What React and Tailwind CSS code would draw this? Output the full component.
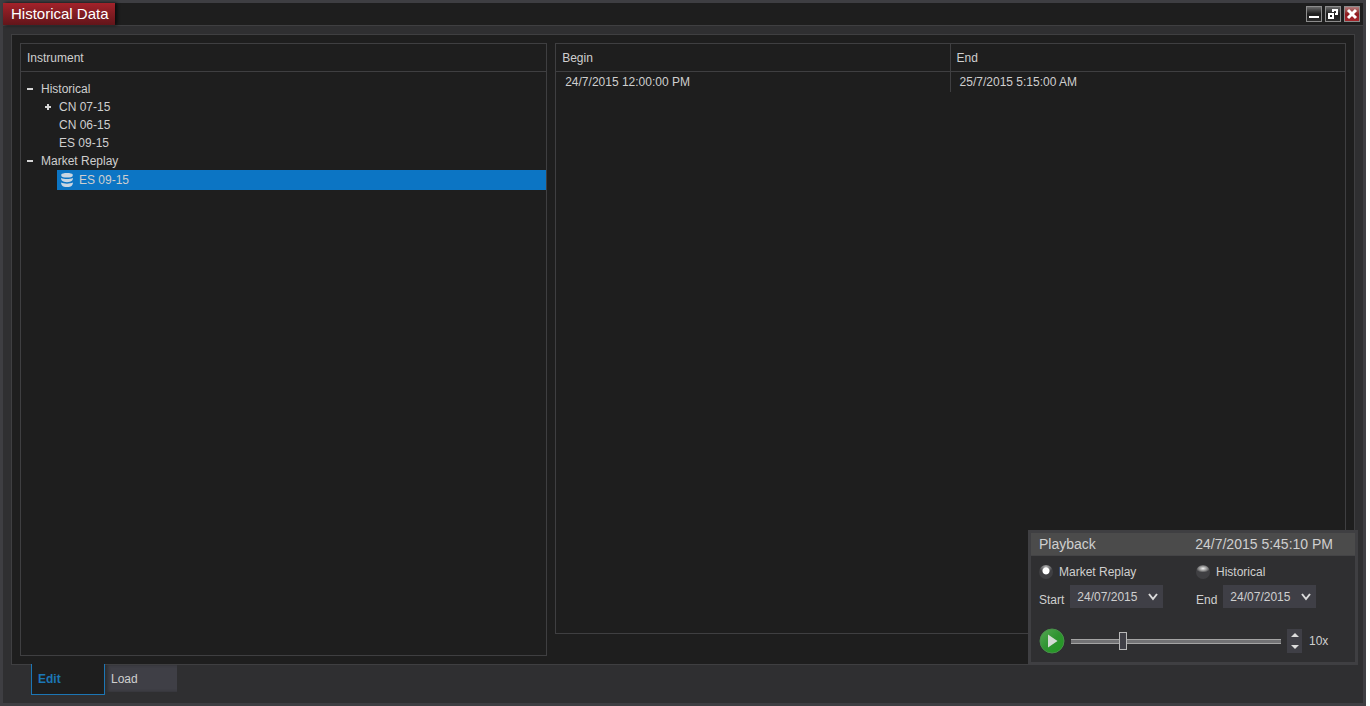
import React, { useState } from 'react';

const WINDOW_BUTTON =
  'flex h-4 w-4 items-center justify-center border border-[#8c8c8c]';

const TREE = [
  {
    id: 'historical',
    label: 'Historical',
    children: [
      { id: 'h-cn-07', label: 'CN 07-15', expandable: true },
      { id: 'h-cn-06', label: 'CN 06-15' },
      { id: 'h-es-09', label: 'ES 09-15' },
    ],
  },
  {
    id: 'replay',
    label: 'Market Replay',
    children: [{ id: 'r-es-09', label: 'ES 09-15', database: true }],
  },
];

const RANGES = [{ begin: '24/7/2015 12:00:00 PM', end: '25/7/2015 5:15:00 AM' }];

// --- Icons ---
const MinusIcon = () => (
  <svg width="6" height="6" viewBox="0 0 6 6" shapeRendering="crispEdges" aria-hidden="true">
    <rect x="0" y="2" width="6" height="2" fill="#d6d6d6" />
  </svg>
);

const PlusIcon = () => (
  <svg width="6" height="6" viewBox="0 0 6 6" shapeRendering="crispEdges" aria-hidden="true">
    <rect x="0" y="2" width="6" height="2" fill="#d6d6d6" />
    <rect x="2" y="0" width="2" height="6" fill="#d6d6d6" />
  </svg>
);

const DatabaseIcon = () => (
  <svg width="12" height="14" viewBox="0 0 12 14" fill="#c9d6e2" aria-hidden="true">
    <path d="M.3 1.500C.8.500 3 0 6 0s5.200.5 5.700 1.500v1.600C11.200 4.100 9 4.600 6 4.600S.8 4.100.3 3.100z" />
    <path d="M0 5c1.800.7 3.700 1 6 1s4.200-.3 6-1c0 1-.3 2-1 2.800C10 8.700 8.300 9.200 6 9.200S2 8.700 1 7.800C.3 7 0 6 0 5z" />
    <path d="M0 9.600c1.800.8 3.700 1.100 6 1.100s4.200-.3 6-1.100c0 1-.3 2-1 2.800-1 1-2.700 1.600-5 1.600s-4-.6-5-1.600c-.7-.8-1-1.800-1-2.800z" />
  </svg>
);

const ChevronIcon = () => (
  <svg
    className="pointer-events-none absolute top-2 right-[5px]"
    width="10"
    height="8"
    viewBox="0 0 10 8"
    aria-hidden="true"
  >
    <path d="M1 1l4 5 4-5" fill="none" stroke="#dcdcdc" strokeWidth="2" />
  </svg>
);

const PlayIcon = () => (
  <svg width="26" height="26" viewBox="0 0 26 26" aria-hidden="true">
    <defs>
      <linearGradient id="play-fill" x1="0" y1="0" x2="1" y2="1">
        <stop offset="0" stopColor="#55a855" />
        <stop offset="0.5" stopColor="#2f9430" />
        <stop offset="1" stopColor="#1f9a20" />
      </linearGradient>
    </defs>
    <circle cx="13" cy="13" r="12" fill="url(#play-fill)" stroke="#4a8f4b" strokeWidth="1" />
    <path d="M9 6.500v13l9.500-6.500z" fill="#d3dcd3" />
  </svg>
);

const TreeToggle = ({ open }) => (
  <span className="flex w-[14px] shrink-0 items-center">{open ? <MinusIcon /> : <PlusIcon />}</span>
);

const InstrumentTree = ({ selected, onSelect }) => {
  const [open, setOpen] = useState({ historical: true, replay: true });

  const toggle = (id) => setOpen((prev) => ({ ...prev, [id]: !prev[id] }));

  return (
    <ul className="pt-2">
      {TREE.map((group) => (
        <li key={group.id}>
          <button
            type="button"
            aria-expanded={open[group.id]}
            onClick={() => toggle(group.id)}
            className="flex h-[18px] w-full items-center pl-[6px] text-left"
          >
            <TreeToggle open={open[group.id]} />
            {group.label}
          </button>
          {open[group.id] && (
            <ul>
              {group.children.map((item) =>
                item.database ? (
                  <li key={item.id} className="pl-9">
                    <button
                      type="button"
                      onClick={() => onSelect(item.id)}
                      className={`flex h-5 w-full items-center gap-[6px] pl-1 text-left ${
                        selected === item.id ? 'bg-[#0c75c4]' : ''
                      }`}
                    >
                      <DatabaseIcon />
                      {item.label}
                    </button>
                  </li>
                ) : (
                  <li key={item.id}>
                    <button
                      type="button"
                      onClick={() => onSelect(item.id)}
                      className={`flex h-[18px] w-full items-center pl-6 text-left ${
                        selected === item.id ? 'bg-[#0c75c4]' : ''
                      }`}
                    >
                      {item.expandable ? <TreeToggle open={false} /> : <span className="w-[14px]" />}
                      {item.label}
                    </button>
                  </li>
                )
              )}
            </ul>
          )}
        </li>
      ))}
    </ul>
  );
};

const SourceRadio = ({ id, label, checked, onChange }) => (
  <div className="flex items-center gap-[6px]">
    <input
      id={id}
      type="radio"
      name="source"
      checked={checked}
      onChange={onChange}
      className="h-[14px] w-[14px] appearance-none rounded-full bg-[radial-gradient(ellipse_7px_4px_at_50%_25%,#f0f0f0,#8c8c8c_60%,#3f3f42_100%)] checked:bg-[radial-gradient(circle_at_50%_42%,#ffffff_3px,transparent_4px),radial-gradient(ellipse_7px_5px_at_50%_15%,#b8b8b8,#3f3f42_100%)]"
    />
    <label htmlFor={id}>{label}</label>
  </div>
);

const DateSelect = ({ id, label }) => (
  <div className="flex items-start gap-[6px]">
    <label htmlFor={id} className="pt-[7px]">
      {label}
    </label>
    <div className="relative">
      <select
        id={id}
        className="h-[23px] w-[93px] appearance-none bg-[#3f3f46] pr-5 pl-[7px] text-xs text-[#cfcfcf]"
      >
        <option>24/07/2015</option>
      </select>
      <ChevronIcon />
    </div>
  </div>
);

const Playback = () => {
  const [source, setSource] = useState('replay');
  const [position, setPosition] = useState(24);
  const [speed, setSpeed] = useState(10);

  return (
    <section className="absolute right-[-4px] -bottom-px w-[330px] border-[3px] border-[#3f3f42] bg-[#2f2f31]">
      <header className="flex h-[23px] items-center justify-between border-b border-[#444446] bg-[#4b4b4b] pr-[22px] pl-2 text-sm">
        <h2>Playback</h2>
        <span>24/7/2015 5:45:10 PM</span>
      </header>

      <div className="px-2 py-2">
        <div className="grid grid-cols-2 gap-x-[6px]">
          <SourceRadio
            id="source-replay"
            label="Market Replay"
            checked={source === 'replay'}
            onChange={() => setSource('replay')}
          />
          <SourceRadio
            id="source-historical"
            label="Historical"
            checked={source === 'historical'}
            onChange={() => setSource('historical')}
          />
        </div>

        <div className="grid grid-cols-2 gap-x-[6px] pt-[5px]">
          <DateSelect id="start-date" label="Start" />
          <DateSelect id="end-date" label="End" />
        </div>

        <div className="flex items-center pt-5">
          <button type="button" aria-label="Play" className="mr-[6px] shrink-0">
            <PlayIcon />
          </button>
          <input
            type="range"
            aria-label="Position"
            min="0"
            max="100"
            value={position}
            onChange={(e) => setPosition(Number(e.target.value))}
            className="h-5 w-[210px] appearance-none bg-transparent [&::-webkit-slider-runnable-track]:h-[5px] [&::-webkit-slider-runnable-track]:border-y [&::-webkit-slider-runnable-track]:border-[#a4a4a4] [&::-webkit-slider-runnable-track]:bg-[#737375] [&::-webkit-slider-thumb]:-mt-[8px] [&::-webkit-slider-thumb]:h-[18px] [&::-webkit-slider-thumb]:w-2 [&::-webkit-slider-thumb]:appearance-none [&::-webkit-slider-thumb]:border [&::-webkit-slider-thumb]:border-[#b8b8b8] [&::-webkit-slider-thumb]:bg-[#3f3f46]"
          />
          <div className="ml-[6px] flex h-6 w-[15px] shrink-0 flex-col bg-[#3f3f46]">
            <button
              type="button"
              aria-label="Faster"
              onClick={() => setSpeed((s) => s + 1)}
              className="flex flex-1 items-center justify-center"
            >
              <svg width="8" height="4" viewBox="0 0 8 4" aria-hidden="true">
                <path d="M0 4l4-4 4 4z" fill="#dcdcdc" />
              </svg>
            </button>
            <button
              type="button"
              aria-label="Slower"
              onClick={() => setSpeed((s) => Math.max(1, s - 1))}
              className="flex flex-1 items-center justify-center"
            >
              <svg width="8" height="4" viewBox="0 0 8 4" aria-hidden="true">
                <path d="M0 0l4 4 4-4z" fill="#dcdcdc" />
              </svg>
            </button>
          </div>
          <span className="ml-[7px]">{speed}x</span>
        </div>
      </div>
    </section>
  );
};

const App = () => {
  const [selected, setSelected] = useState('r-es-09');

  return (
    <div className="bg-white pr-1">
      <div className="flex h-screen flex-col border-[3px] border-[#3e3e42] bg-[#2f2f31] font-['Liberation_Sans',Arial,sans-serif] text-xs text-[#cfcfcf]">
        {/* --- Title bar --- */}
        <header className="flex h-[23px] shrink-0 items-center justify-between border-b border-[#3f3f41] bg-[#1e1e1e]">
          <h1 className="flex h-full items-center bg-linear-to-b from-[#a3222a] to-[#62151a] pr-[6px] pl-2 text-[15px] text-white shadow-[2px_0_3px_#0a0a0a]">
            Historical Data
          </h1>
          <div className="flex gap-[3px] pr-[3px]">
            <button
              type="button"
              aria-label="Minimize"
              className={`${WINDOW_BUTTON} bg-linear-to-b from-[#6a6a6a] via-[#1c1c1c] to-[#2a2a2a]`}
            >
              <svg width="14" height="14" viewBox="0 0 14 14" shapeRendering="crispEdges" aria-hidden="true">
                <rect x="2" y="9" width="10" height="2" fill="#fff" />
              </svg>
            </button>
            <button
              type="button"
              aria-label="Restore"
              className={`${WINDOW_BUTTON} bg-linear-to-b from-[#6a6a6a] via-[#1c1c1c] to-[#2a2a2a]`}
            >
              <svg
                width="14"
                height="14"
                viewBox="0 0 14 14"
                fill="none"
                stroke="#fff"
                strokeWidth="2"
                shapeRendering="crispEdges"
                aria-hidden="true"
              >
                <path d="M3 7h4v4H3z" />
                <path d="M7 5V3h4v4H9" />
              </svg>
            </button>
            <button
              type="button"
              aria-label="Close"
              className={`${WINDOW_BUTTON} bg-linear-to-b from-[#b07a7c] via-[#8f1a1f] to-[#a3262c]`}
            >
              <svg width="14" height="14" viewBox="0 0 14 14" aria-hidden="true">
                <path d="M3 3l8 8M11 3l-8 8" stroke="#fff" strokeWidth="3" />
              </svg>
            </button>
          </div>
        </header>

        <div className="flex min-h-0 flex-1 flex-col px-2 pt-2 pb-2">
          <main className="relative grid min-h-0 flex-1 grid-cols-[2fr_3fr] gap-2 border border-[#3f3f41] bg-[#1e1e1e] p-2">
            {/* --- Instruments --- */}
            <section className="border border-[#3f3f41]">
              <h2 className="flex h-7 items-center border-b border-[#3f3f41] px-[6px]">Instrument</h2>
              <InstrumentTree selected={selected} onSelect={setSelected} />
            </section>

            {/* --- Available ranges --- */}
            <section className="mb-[22px] border border-[#3f3f41]">
              <table className="w-full table-fixed border-separate border-spacing-0 text-left">
                <thead>
                  <tr>
                    <th className="h-7 border-r border-b border-[#3f3f41] px-[6px] font-normal">Begin</th>
                    <th className="h-7 border-b border-[#3f3f41] px-[6px] font-normal">End</th>
                  </tr>
                </thead>
                <tbody>
                  {RANGES.map((range) => (
                    <tr key={range.begin}>
                      <td className="h-5 border-r border-[#3f3f41] px-[9px]">{range.begin}</td>
                      <td className="h-5 px-[9px]">{range.end}</td>
                    </tr>
                  ))}
                </tbody>
              </table>
            </section>

            <Playback />
          </main>

          {/* --- Bottom tabs --- */}
          <nav className="z-10 -mt-px ml-5 flex shrink-0 items-start">
            <button
              type="button"
              className="h-[31px] w-[74px] border-x border-b border-[#1c76b5] bg-[#1e1e1e] px-[6px] text-left font-bold text-[#1c76b5]"
            >
              Edit
            </button>
            <button
              type="button"
              className="mt-px h-[27px] w-[72px] bg-[#3f3f46] px-[6px] text-left shadow-[inset_3px_0_3px_#2f2f31]"
            >
              Load
            </button>
          </nav>
        </div>
      </div>
    </div>
  );
};

export default App;
